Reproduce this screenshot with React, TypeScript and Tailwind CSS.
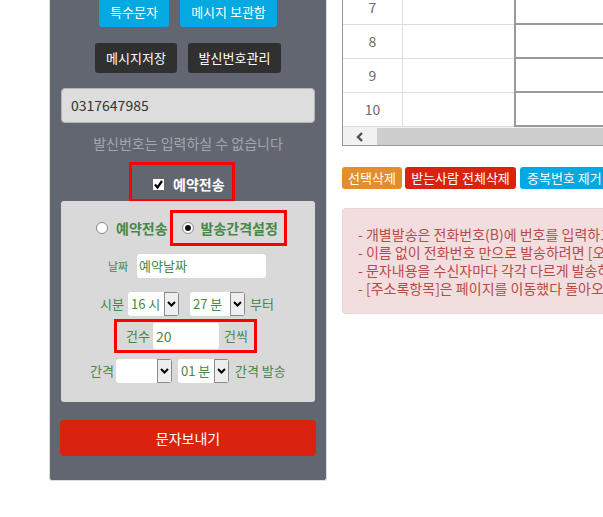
import React from 'react';

const green = 'text-[#468847]';

function Chevron() {
  return (
    <svg width="9" height="6" viewBox="0 0 9 6">
      <path d="M1 1 L4.5 4.5 L8 1" stroke="#000" strokeWidth="2" fill="none" />
    </svg>
  );
}

function Select({ value, width }: { value: string; width: string }) {
  return (
    <div className={`flex h-[24px] ${width} bg-white rounded-[3px] overflow-hidden shrink-0`}>
      <span className={`flex-1 pl-[3px] text-[13px] leading-[24px] whitespace-nowrap ${green}`}>{value}</span>
      <div className="w-[15px] h-full bg-[#eeeeee] border border-[#8a8a8a] flex items-center justify-center shrink-0">
        <Chevron />
      </div>
    </div>
  );
}

function Radio({ checked }: { checked?: boolean }) {
  return (
    <span className="w-[12px] h-[12px] rounded-full bg-white border border-[#888] flex items-center justify-center shrink-0">
      {checked && <span className="w-[6px] h-[6px] rounded-full bg-[#111]" />}
    </span>
  );
}

const rows = ['7', '8', '9', '10'];

const notices = [
  '- 개별발송은 전화번호(B)에 번호를 입력하고 이름(A)에 이름을 입력하세요.',
  '- 이름 없이 전화번호 만으로 발송하려면 [오른쪽 칸]에 번호만 입력하세요.',
  '- 문자내용을 수신자마다 각각 다르게 발송하려면 항목을 선택하세요.',
  '- [주소록항목]은 페이지를 이동했다 돌아오면 초기화됩니다.',
];

export default function App() {
  return (
    <div className="w-[603px] h-[517px] overflow-hidden bg-white flex items-start font-['Noto_Sans_CJK_KR','Noto_Sans',sans-serif]">
      {/* Left: 발신 설정 패널 */}
      <div className="ml-[49px] w-[278px] shrink-0 bg-[#626670] border border-t-0 border-[#dddddd] rounded-b-[3px] px-[10px] pb-[24px] flex flex-col">
        <div className="flex justify-center gap-[11px] -mt-[3px]">
          <button className="h-[30px] w-[70px] bg-[#03a9e0] text-white text-[13px] rounded-[3px] whitespace-nowrap">특수문자</button>
          <button className="h-[30px] w-[97px] bg-[#03a9e0] text-white text-[13px] rounded-[3px] whitespace-nowrap">메시지 보관함</button>
        </div>
        <div className="flex justify-center gap-[11px] mt-[16px]">
          <button className="h-[30px] w-[82px] bg-[#303030] text-white text-[13px] rounded-[3px] whitespace-nowrap">메시지저장</button>
          <button className="h-[30px] w-[93px] bg-[#303030] text-white text-[13px] rounded-[3px] whitespace-nowrap">발신번호관리</button>
        </div>
        <div className="mx-[1px] mt-[15px] h-[35px] bg-[#dddddd] border border-[#b5b5b5] rounded-[4px] pl-[9px] flex items-center text-[14px] text-[#333]">
          0317647985
        </div>
        <div className="mt-[10px] h-[20px] leading-[20px] text-center text-[14px] text-[#a3a7ad] whitespace-nowrap">발신번호는 입력하실 수 없습니다</div>

        <div className="ml-[69px] mt-[9px] w-[106px] h-[40px] border-[3px] border-[#ff0000] flex items-center pl-[21px] pt-[4px]">
          <span className="w-[11px] h-[11px] bg-white flex items-center justify-center shrink-0">
            <svg width="9" height="9" viewBox="0 0 9 9">
              <path d="M1 4.5 L3.5 7.5 L8 1" stroke="#000" strokeWidth="2.2" fill="none" />
            </svg>
          </span>
          <span className="ml-[9px] text-[14px] font-bold text-white leading-none whitespace-nowrap">예약전송</span>
        </div>

        {/* 예약 옵션 */}
        <div className="mx-[1px] -mt-[1px] bg-[#d9d9d9] rounded-[3px] pt-[9px] pb-[19px] flex flex-col">
          <div className="flex items-center pl-[35px]">
            <Radio />
            <span className={`ml-[8px] text-[14px] font-bold whitespace-nowrap ${green}`}>예약전송</span>
            <div className="ml-[2px] h-[36px] border-[3px] border-[#ff0000] flex items-center pl-[9px] pr-[6px]">
              <Radio checked />
              <span className={`ml-[7px] text-[14px] font-bold whitespace-nowrap ${green}`}>발송간격설정</span>
            </div>
          </div>

          <div className="flex items-center mt-[8px] pl-[47px]">
            <span className={`w-[20px] text-[11px] whitespace-nowrap ${green}`}>날짜</span>
            <div className={`ml-[9px] h-[24px] w-[129px] bg-white rounded-[3px] pl-[2px] text-[13px] leading-[24px] ${green}`}>예약날짜</div>
          </div>

          <div className="flex items-center mt-[14px] pl-[39px]">
            <span className={`w-[24px] text-[13px] whitespace-nowrap ${green}`}>시분</span>
            <div className="ml-[4px]"><Select value="16 시" width="w-[51px]" /></div>
            <div className="ml-[11px]"><Select value="27 분" width="w-[55px]" /></div>
            <span className={`ml-[5px] text-[13px] whitespace-nowrap ${green}`}>부터</span>
          </div>

          <div className="self-start ml-[53px] mt-[3px] w-[143px] h-[34px] border-[3px] border-[#ff0000] flex items-center pl-[9px]">
            <span className={`w-[23px] text-[13px] whitespace-nowrap ${green}`}>건수</span>
            <div className={`ml-[4px] h-[26px] w-[66px] bg-white rounded-[3px] pl-[3px] text-[14px] leading-[26px] ${green}`}>20</div>
            <span className={`ml-[5px] text-[13px] whitespace-nowrap ${green}`}>건씩</span>
          </div>

          <div className="flex items-center mt-[6px] pl-[29px]">
            <span className={`w-[24px] text-[13px] whitespace-nowrap ${green}`}>간격</span>
            <div className="ml-[2px]"><Select value="" width="w-[56px]" /></div>
            <div className="ml-[6px]"><Select value="01 분" width="w-[51px]" /></div>
            <span className={`ml-[6px] text-[13px] whitespace-nowrap ${green}`}>간격 발송</span>
          </div>
        </div>

        <button className="mt-[18px] h-[36px] w-full bg-[#d9230f] rounded-[4px] text-white text-[14px]">문자보내기</button>
      </div>

      {/* Right: 받는사람 목록 */}
      <div className="ml-[15px] w-[420px] shrink-0 flex flex-col">
        <div className="-mt-[9px] border-l border-b border-[#999]">
          {rows.map((n) => (
            <div key={n} className="flex h-[34px]">
              <div className="w-[60px] border-r border-b border-[#dddddd] flex items-center justify-center text-[14px] text-[#6b6b6b]">{n}</div>
              <div className="w-[111px] border-b border-[#dddddd]" />
              <div className="flex-1 border-l-2 border-b-2 border-[#999]" />
            </div>
          ))}
          <div className="flex h-[18px] bg-[#f1f1f1] pt-[1px]">
            <div className="w-[34px] flex items-center justify-center">
              <svg width="8" height="10" viewBox="0 0 8 10">
                <path d="M6 1 L2 5 L6 9" stroke="#505050" strokeWidth="2.4" fill="none" />
              </svg>
            </div>
            <div className="flex-1 bg-[#cdcdcd]" />
          </div>
        </div>

        <div className="flex gap-[3px] mt-[21px]">
          <button className="h-[22px] w-[60px] bg-[#e38d2c] text-white text-[13px] rounded-[3px] whitespace-nowrap">선택삭제</button>
          <button className="h-[22px] w-[111px] bg-[#d9230f] text-white text-[13px] rounded-[3px] whitespace-nowrap">받는사람 전체삭제</button>
          <button className="ml-[1px] h-[22px] px-[7px] bg-[#03a9e0] text-white text-[13px] rounded-[3px] whitespace-nowrap">중복번호 제거</button>
        </div>

        <div className="mt-[19px] h-[106px] bg-[#f2dede] border border-[#eed3d7] rounded-[4px] pt-[16px] pl-[15px] text-[14px] leading-[18px] text-[#b94a48] whitespace-nowrap overflow-hidden">
          {notices.map((t) => (
            <div key={t}>{t}</div>
          ))}
        </div>
      </div>
    </div>
  );
}
